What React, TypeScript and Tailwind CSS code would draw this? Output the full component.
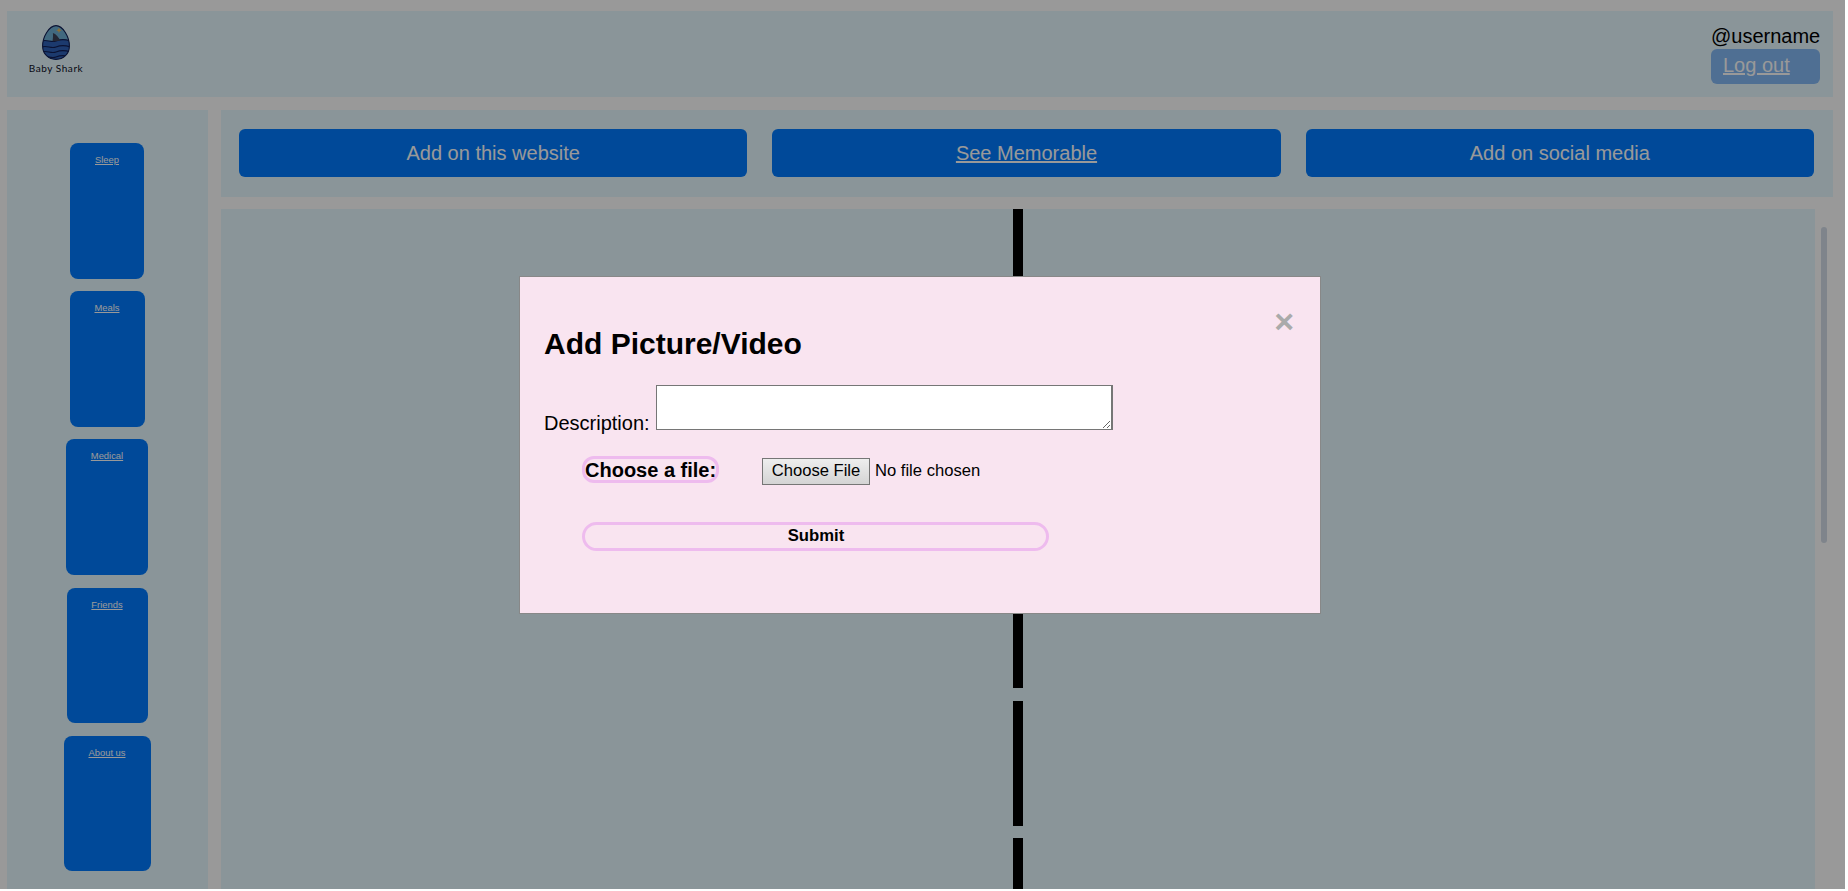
const cards = [
  { label: "Sleep", cls: "w-[74px] h-[136px]" },
  { label: "Meals", cls: "w-[75px] h-[136px]" },
  { label: "Medical", cls: "w-[82px] h-[136px]" },
  { label: "Friends", cls: "w-[81px] h-[135px] mt-[1px]" },
  { label: "About us", cls: "w-[87px] h-[135px] mt-[1px]" },
];

const lanes = ["h-[69px]", "h-[125px]", "h-[125px]", "h-[124px] mb-[1px]", "h-[125px]", "h-[125px]"];

const EGG = "M14 .6C7 .6.6 12 .6 21c0 8 6 13.4 13.4 13.4S27.4 29 27.4 21C27.4 12 21 .6 14 .6Z";

function Logo() {
  return (
    <div className="flex flex-col items-center w-[54px]">
      <svg width="28" height="35" viewBox="0 0 28 35">
        <defs>
          <clipPath id="egg">
            <path d={EGG} />
          </clipPath>
        </defs>
        <path d={EGG} fill="#6fb0d4" />
        <g clipPath="url(#egg)">
          <path d="M0 16c5-2 9 2 14 0s9-2 14 0v20H0Z" fill="#2f62b8" />
          <path d="M0 16c5-2 9 2 14 0s9-2 14 0M0 22c5-2 9 2 14 0s9-2 14 0M0 27c5-2 9 2 14 0s9-2 14 0M0 32c5-2 9 2 14 0s9-2 14 0" fill="none" stroke="#121f55" strokeWidth="1.2" />
        </g>
        <path d="M10.5 16c.6-3 .6-6 .4-8 3 1 6 4 7.4 8-2.400-.6-5.400.6-7.800 0Z" fill="#3d4258" />
        <path d="M17 2.500l.8 1.900 1.900.8-1.900.8-.8 1.900-.8-1.900-1.900-.8 1.900-.8Z" fill="#f4b850" />
        <path d={EGG} fill="none" stroke="#121f55" strokeWidth="1.1" />
      </svg>
      <span className="mt-[2px] font-['Lato',sans-serif] text-[10px] leading-[12px] tracking-[0.55px] text-[#0c1026] whitespace-nowrap">Baby Shark</span>
    </div>
  );
}

export default function App() {
  return (
    <div className="relative w-[1845px] h-[889px] overflow-hidden bg-white font-['Liberation_Sans',Arial,sans-serif]">
      <div className="flex flex-col gap-[13px] pt-[11px] pl-[7px] pr-[12px] h-full">
        <header className="flex justify-between h-[86px] shrink-0 bg-[#e6f8ff] pl-[22px] pr-[13px] pt-[14px]">
          <Logo />
          <div className="flex flex-col items-start w-[109px]">
            <span className="text-[20px] leading-[23px] text-black">@username</span>
            <a href="#" className="mt-[1px] w-[109px] h-[35px] rounded-[6px] bg-[#84b9f5] pl-[12px] text-[20px] leading-[33px] text-white underline">Log out</a>
          </div>
        </header>
        <div className="flex gap-[13px] flex-1 min-h-0">
          <aside className="w-[201px] shrink-0 bg-[#e6f8ff] flex flex-col items-center gap-[12px] pt-[33px] pr-[1px]">
            {cards.map((c) => (
              <div key={c.label} className={`${c.cls} rounded-[8px] bg-[#007bff] text-center pt-[11px]`}>
                <a href="#" className="block text-[9.4px] leading-[12px] text-white underline">{c.label}</a>
              </div>
            ))}
          </aside>
          <main className="flex-1 min-w-0 flex flex-col gap-[12px]">
            <nav className="h-[87px] shrink-0 bg-[#e6f8ff] flex gap-[25px] pl-[18px] pr-[19px] pt-[19px] pb-[20px]">
              {["Add on this website", "See Memorable", "Add on social media"].map((t, i) => (
                <a key={t} href="#" className={`flex-1 rounded-[6px] bg-[#007bff] text-white text-[20px] flex items-center justify-center ${i === 1 ? "underline" : ""}`}>{t}</a>
              ))}
            </nav>
            <div className="flex flex-1 min-h-0">
              <section className="flex-1 bg-[#e6f8ff] flex flex-col items-center gap-[12px] overflow-hidden">
                {lanes.map((h, i) => <div key={i} className={`${h} w-[10px] shrink-0 bg-black`} />)}
              </section>
              <div className="w-[18px] shrink-0 pt-[18px] pl-[6px]">
                <div className="w-[6px] h-[316px] rounded-[3px] bg-[#d4dce8]" />
              </div>
            </div>
          </main>
        </div>
      </div>

      <div className="absolute inset-0 bg-black/40" />

      <div className="absolute left-[519px] top-[276px] w-[802px] h-[338px] bg-[#f9e4f0] border border-[#888] px-[24px]">
        <button className="absolute right-[26px] top-[30px] text-[#aaa] text-[34px] leading-[28px] font-bold">×</button>
        <h2 className="text-[30px] leading-[36px] font-bold text-black mt-[49px]">Add Picture/Video</h2>
        <div className="mt-[23px] h-[51px] text-[20px] leading-[24px] text-black">
          <label>Description:</label>
          <textarea className="ml-[6px] w-[457px] h-[45px] border border-r-2 border-[#767676] bg-white" />
        </div>
        <div className="ml-[38px] mt-[20px] flex items-start">
          <label className="w-[137px] h-[27px] rounded-[12px] border-[3px] border-[#eebbee] text-[20px] leading-[22px] font-bold text-black whitespace-nowrap">Choose a file:</label>
          <button className="ml-[43px] mt-[2px] w-[108px] h-[27px] border border-[#767676] bg-gradient-to-b from-[#eeeeee] to-[#d4d4d4] text-[16.6px] text-black">Choose File</button>
          <span className="ml-[5px] mt-[5px] text-[16.6px] leading-[20px] text-black">No file chosen</span>
        </div>
        <button className="block ml-[38px] mt-[37px] w-[467px] h-[29px] rounded-[15px] border-[3px] border-[#eebbee] pl-[1px] pb-[1px] text-[16.7px] leading-[20px] font-bold text-black">Submit</button>
      </div>
    </div>
  );
}
